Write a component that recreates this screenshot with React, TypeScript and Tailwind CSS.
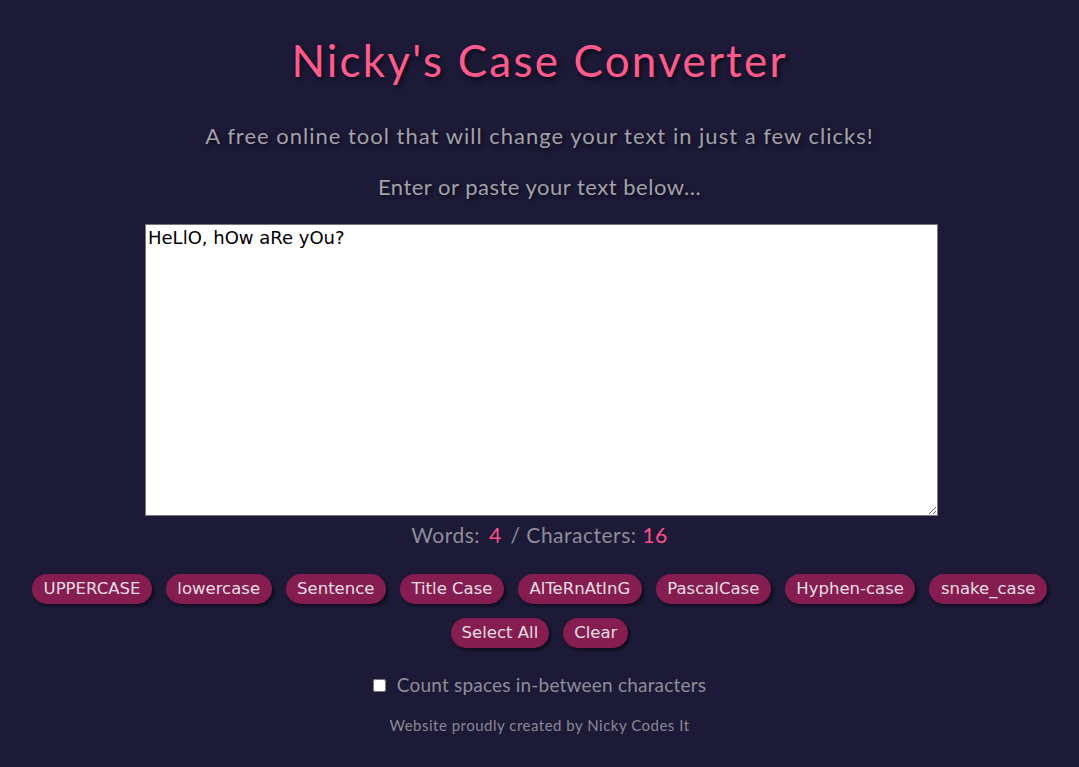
import { useState } from 'react';

const buttons = [
  'UPPERCASE',
  'lowercase',
  'Sentence',
  'Title Case',
  'AlTeRnAtInG',
  'PascalCase',
  'Hyphen-case',
  'snake_case',
];

export default function App() {
  const [text, setText] = useState('HeLlO, hOw aRe yOu?');
  const [countSpaces, setCountSpaces] = useState(false);

  const words = text.trim() ? text.trim().split(/\s+/).length : 0;
  const chars = countSpaces ? text.length : text.replace(/\s/g, '').length;

  return (
    <div className="min-h-screen bg-[#1c1a37] flex flex-col items-center pt-[30px] font-['Lato',sans-serif]">
      <h1 className="text-[44px] leading-[60px] text-[#ff5a8c] tracking-[2.2px] [text-shadow:2px_3px_5px_#0b0a18]">
        Nicky's Case Converter
      </h1>
      <p className="mt-[32px] text-[22px] leading-[28px] text-[#a3a1a8] tracking-[1px] [text-shadow:2px_2px_4px_#0b0a18]">
        A free online tool that will change your text in just a few clicks!
      </p>
      <p className="mt-[23px] text-[22px] leading-[28px] text-[#a3a1a8] tracking-[0.5px] [text-shadow:2px_2px_4px_#0b0a18]">
        Enter or paste your text below...
      </p>
      <textarea
        value={text}
        onChange={(e) => setText(e.target.value)}
        className="mt-[23px] ml-[4px] w-[793px] h-[292px] bg-white border border-[#767676] px-[2px] py-[1px] text-[18px] leading-[23px] text-black font-['DejaVu_Sans',sans-serif] outline-none"
      />
      <div className="mt-[2px] text-[21px] leading-[34px] text-[#8f8d99] tracking-[0.5px]">
        Words: <span className="text-[#ff4f8b] mx-[3px]">{words}</span> / Characters:{' '}
        <span className="text-[#ff4f8b]">{chars}</span>
      </div>
      <div className="mt-[22px] flex flex-wrap justify-center w-full px-[20px]">
        {buttons.map((b) => (
          <button
            key={b}
            className="mx-[7px] mb-[14px] h-[30px] px-[11.5px] rounded-[15px] bg-[#861d50] text-[#e9dfe3] text-[16.5px] font-['DejaVu_Sans',sans-serif] shadow-[2px_2px_3px_#0d0b1c]"
          >
            {b}
          </button>
        ))}
      </div>
      <div className="flex justify-center gap-[14px]">
        <button className="h-[30px] px-[11px] rounded-[15px] bg-[#861d50] text-[#e9dfe3] text-[16.5px] font-['DejaVu_Sans',sans-serif] shadow-[2px_2px_3px_#0d0b1c]">
          Select All
        </button>
        <button className="h-[30px] px-[11px] rounded-[15px] bg-[#861d50] text-[#e9dfe3] text-[16.5px] font-['DejaVu_Sans',sans-serif] shadow-[2px_2px_3px_#0d0b1c]">
          Clear
        </button>
      </div>
      <label className="mt-[22px] flex items-center gap-[11px] text-[19px] leading-[30px] text-[#8f8d99] tracking-[0.2px]">
        <input
          type="checkbox"
          checked={countSpaces}
          onChange={(e) => setCountSpaces(e.target.checked)}
          className="w-[13px] h-[13px]"
        />
        Count spaces in-between characters
      </label>
      <p className="mt-[14px] text-[15px] leading-[22px] text-[#8a8894] tracking-[0.5px]">
        Website proudly created by Nicky Codes It
      </p>
    </div>
  );
}
